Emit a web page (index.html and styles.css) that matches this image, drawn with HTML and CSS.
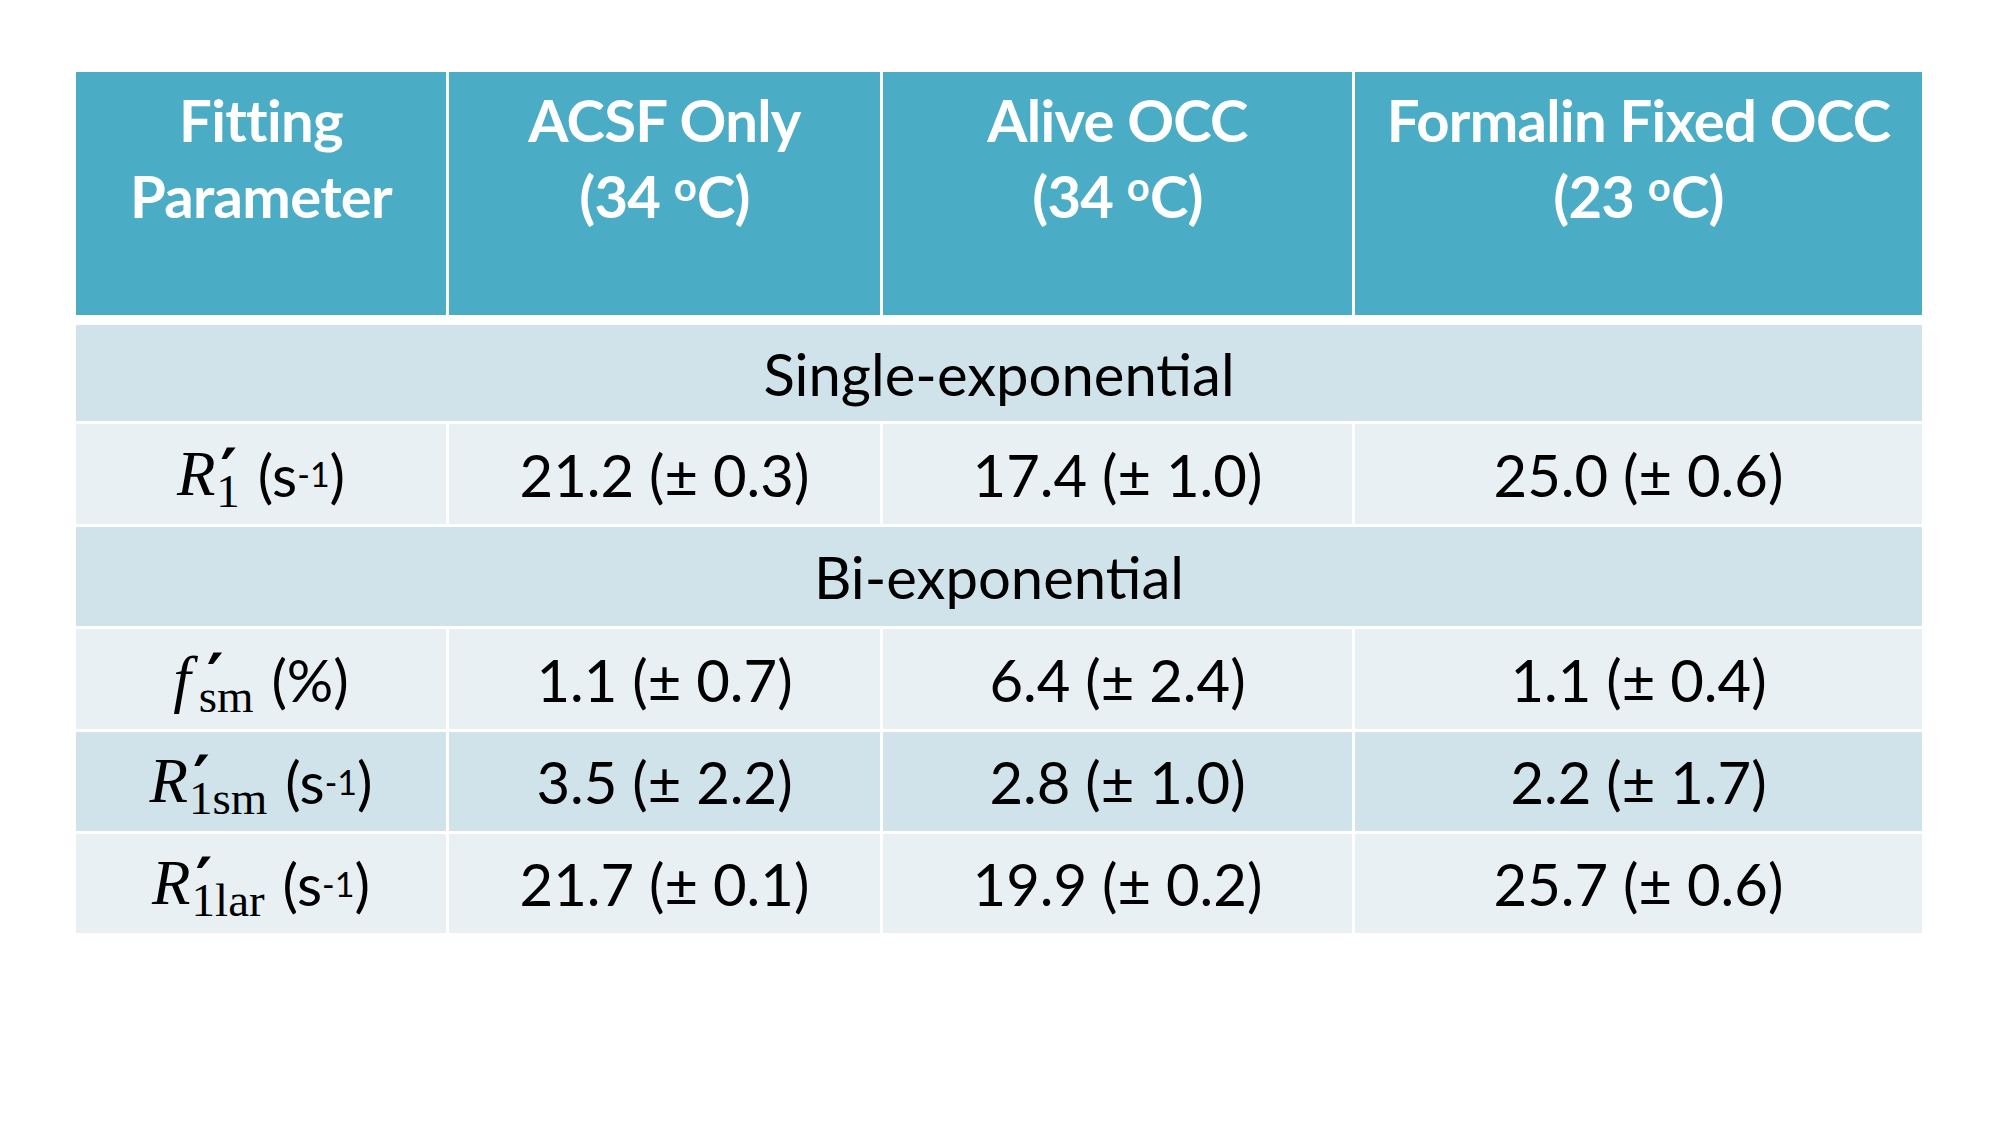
FILE: index.html
```html
<!DOCTYPE html>
<html>
<head>
<meta charset="utf-8">
<link rel="stylesheet" href="styles.css">
</head>
<body>
<div class="page">
  <div class="grid head">
    <div class="hd">Fitting<br>Parameter</div>
    <div class="hd">ACSF Only<br>(34 <span class="deg">o</span>C)</div>
    <div class="hd">Alive OCC<br>(34 <span class="deg">o</span>C)</div>
    <div class="hd">Formalin Fixed OCC<br>(23 <span class="deg">o</span>C)</div>
  </div>
  <div class="grid body">
    <div class="cell sec dark">Single-exponential</div>

    <div class="cell light"><span class="m"><i class="mi">R</i><span class="ss"><span class="pr">′</span><span class="sb">1</span></span></span> (s<span class="sup">-1</span>)</div>
    <div class="cell light">21.2 (± 0.3)</div>
    <div class="cell light">17.4 (± 1.0)</div>
    <div class="cell light">25.0 (± 0.6)</div>

    <div class="cell sec dark">Bi-exponential</div>

    <div class="cell light"><span class="m"><i class="mi">f</i><span class="ss ssf"><span class="pr prf">′</span><span class="sb">sm</span></span></span> (%)</div>
    <div class="cell light">1.1 (± 0.7)</div>
    <div class="cell light">6.4 (± 2.4)</div>
    <div class="cell light">1.1 (± 0.4)</div>

    <div class="cell dark"><span class="m"><i class="mi">R</i><span class="ss"><span class="pr">′</span><span class="sb">1sm</span></span></span> (s<span class="sup">-1</span>)</div>
    <div class="cell dark">3.5 (± 2.2)</div>
    <div class="cell dark">2.8 (± 1.0)</div>
    <div class="cell dark">2.2 (± 1.7)</div>

    <div class="cell light"><span class="m"><i class="mi">R</i><span class="ss"><span class="pr">′</span><span class="sb">1lar</span></span></span> (s<span class="sup">-1</span>)</div>
    <div class="cell light">21.7 (± 0.1)</div>
    <div class="cell light">19.9 (± 0.2)</div>
    <div class="cell light">25.7 (± 0.6)</div>
  </div>
</div>
</body>
</html>
```

FILE: styles.css
```css
html, body {
  margin: 0;
  padding: 0;
  background: #ffffff;
}

.page {
  padding: 72px 0 0 76px;
}

.grid {
  display: grid;
  grid-template-columns: 370px 431px 469px 567px;
  column-gap: 3px;
  width: 1846px;
}

.head {
  grid-template-rows: 243px;
}

.body {
  margin-top: 10px;
  grid-template-rows: 96px 100px 99px 100px 99px 99px;
  row-gap: 3px;
}

.hd {
  background: #4bacc6;
  color: #ffffff;
  font-family: "Lato", "Open Sans", sans-serif;
  font-weight: 700;
  font-size: 58px;
  line-height: 76px;
  text-align: center;
  padding-top: 10px;
  box-sizing: border-box;
  letter-spacing: -0.7px;
}

.deg {
  font-size: 40px;
  vertical-align: 17px;
  line-height: 0;
  margin-right: 1px;
}

.cell {
  display: flex;
  align-items: center;
  justify-content: center;
  font-family: "Lato", "Open Sans", sans-serif;
  font-size: 58px;
  color: #000000;
  white-space: pre;
}

.sec {
  grid-column: 1 / -1;
}

.dark {
  background: #d0e3ea;
}

.light {
  background: #e8f0f4;
}

.m {
  font-family: "Liberation Serif", "DejaVu Serif", serif;
  font-size: 63px;
  margin-right: 3px;
  line-height: 1;
}

.mi {
  font-style: italic;
}

.ss {
  display: inline-flex;
  flex-direction: column;
  align-items: flex-start;
  vertical-align: 1px;
  margin-left: 1px;
}

.ssf {
  margin-left: 8px;
}

.pr {
  font-family: "DejaVu Serif", serif;
  font-weight: 700;
  font-size: 64px;
  line-height: 10px;
  height: 10px;
  margin-bottom: 8px;
  padding-left: 4px;
}

.prf {
  padding-left: 8px;
}

.sb {
  font-family: "Liberation Serif", "DejaVu Serif", serif;
  font-size: 47px;
  line-height: 12px;
  height: 12px;
}

.sup {
  font-size: 34px;
  vertical-align: 16px;
  line-height: 0;
}
```
